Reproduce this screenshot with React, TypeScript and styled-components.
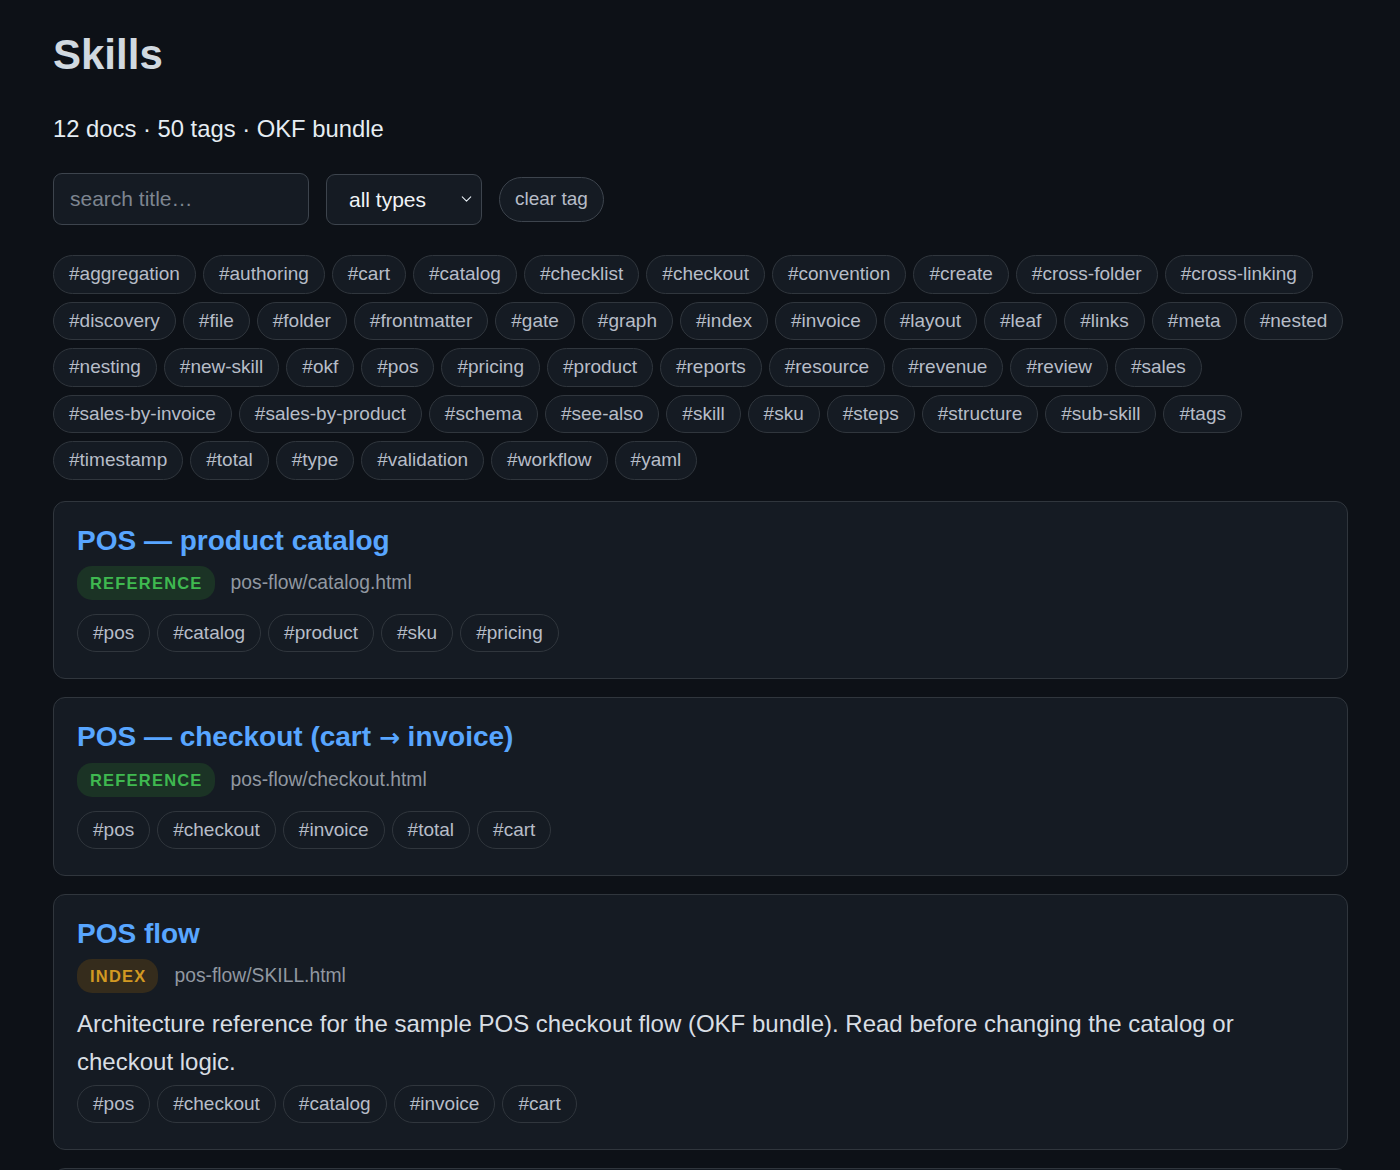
import styled, { createGlobalStyle } from "styled-components";
import { ChevronDown } from "lucide-react";

const GlobalStyle = createGlobalStyle`
  * { box-sizing: border-box; }
  html, body {
    margin: 0;
    background: #0d1117;
    color: #d8dee4;
    font-family: "Liberation Sans", Helvetica, Arial, sans-serif;
  }
`;

type DocType = "reference" | "index" | "skill";

interface Doc {
  title: string;
  type: DocType;
  path: string;
  desc?: string;
  tags: string[];
}

const allTags = [
  "aggregation", "authoring", "cart", "catalog", "checklist", "checkout", "convention", "create",
  "cross-folder", "cross-linking", "discovery", "file", "folder", "frontmatter", "gate", "graph",
  "index", "invoice", "layout", "leaf", "links", "meta", "nested", "nesting", "new-skill", "okf",
  "pos", "pricing", "product", "reports", "resource", "revenue", "review", "sales",
  "sales-by-invoice", "sales-by-product", "schema", "see-also", "skill", "sku", "steps",
  "structure", "sub-skill", "tags", "timestamp", "total", "type", "validation", "workflow", "yaml",
];

const docs: Doc[] = [
  {
    title: "POS — product catalog",
    type: "reference",
    path: "pos-flow/catalog.html",
    tags: ["pos", "catalog", "product", "sku", "pricing"],
  },
  {
    title: "POS — checkout (cart → invoice)",
    type: "reference",
    path: "pos-flow/checkout.html",
    tags: ["pos", "checkout", "invoice", "total", "cart"],
  },
  {
    title: "POS flow",
    type: "index",
    path: "pos-flow/SKILL.html",
    desc: "Architecture reference for the sample POS checkout flow (OKF bundle). Read before changing the catalog or checkout logic.",
    tags: ["pos", "checkout", "catalog", "invoice", "cart"],
  },
  {
    title: "Reports — sales by invoice",
    type: "reference",
    path: "reports/sales-by-invoice.html",
    tags: ["reports", "sales", "sales-by-invoice", "aggregation"],
  },
  {
    title: "Reports — sales by product",
    type: "reference",
    path: "reports/sales-by-product.html",
    tags: ["reports", "sales", "sales-by-product", "revenue"],
  },
];

const Page = styled.main`
  padding: 30px 52px 40px 53px;
`;

const Title = styled.h1`
  margin: 0;
  font-size: 42px;
  line-height: 50px;
  font-weight: 700;
  color: #d1d9e0;
`;

const Summary = styled.p`
  margin: 31px 0 0;
  font-size: 23.8px;
  line-height: 36px;
  color: #e6edf3;
`;

const Controls = styled.div`
  display: flex;
  align-items: center;
  gap: 17px;
  height: 52px;
  margin-top: 26px;
`;

const SearchInput = styled.input`
  width: 256px;
  height: 52px;
  padding: 0 16px;
  background: #151b23;
  border: 1px solid #3d444d;
  border-radius: 9px;
  color: #e6edf3;
  font: 21px "Liberation Sans", Helvetica, Arial, sans-serif;
  outline: none;

  &::placeholder {
    color: #7d8590;
  }
`;

const SelectWrap = styled.div`
  position: relative;
  width: 156px;
  height: 51px;
`;

const TypeSelect = styled.select`
  appearance: none;
  width: 100%;
  height: 100%;
  padding: 0 34px 0 22px;
  background: #151b23;
  border: 1px solid #3d444d;
  border-radius: 9px;
  color: #f0f3f6;
  font: 21px "Liberation Sans", Helvetica, Arial, sans-serif;
  outline: none;
`;

const Chevron = styled(ChevronDown)`
  position: absolute;
  right: 7px;
  top: 50%;
  transform: translateY(-50%);
  color: #e6edf3;
  pointer-events: none;
`;

const ClearButton = styled.button`
  height: 45px;
  padding: 0 15px;
  background: #151b23;
  border: 1px solid #3d444d;
  border-radius: 999px;
  color: #b7bdc8;
  font: 19px "Liberation Sans", Helvetica, Arial, sans-serif;
  cursor: pointer;
`;

const TagList = styled.div<{ $top?: number }>`
  display: flex;
  flex-wrap: wrap;
  column-gap: 7px;
  row-gap: 8px;
  margin-top: ${(p) => p.$top ?? 0}px;
`;

const Chip = styled.span`
  display: inline-block;
  height: 38.5px;
  padding: 0 15px;
  line-height: 36.5px;
  font-size: 19px;
  color: #b7bdc8;
  background: #151b23;
  border: 1px solid #30363d;
  border-radius: 999px;
  white-space: nowrap;
`;

const DocList = styled.div`
  display: flex;
  flex-direction: column;
  gap: 18px;
  margin-top: 21px;
`;

const Card = styled.article`
  padding: 22px 23px 25.5px;
  background: #151b23;
  border: 1px solid #30363d;
  border-radius: 12px;
`;

const DocTitle = styled.a`
  display: block;
  font-size: 28px;
  line-height: 34px;
  font-weight: 700;
  color: #58a6ff;
  text-decoration: none;
`;

const Arrow = styled.span`
  font-family: "DejaVu Sans", sans-serif;
  font-size: 25px;
`;

const Meta = styled.div`
  display: flex;
  align-items: center;
  gap: 16px;
  margin-top: 8px;
`;

const badgeColors: Record<DocType, { bg: string; fg: string }> = {
  reference: { bg: "#1b3325", fg: "#3fb950" },
  index: { bg: "#352c1c", fg: "#d29922" },
  skill: { bg: "#1a2c45", fg: "#58a6ff" },
};

const Badge = styled.span<{ $type: DocType }>`
  height: 34px;
  padding: 0 12px 0 13px;
  line-height: 34px;
  border-radius: 15px;
  font-size: 16.5px;
  font-weight: 700;
  letter-spacing: 1.2px;
  text-transform: uppercase;
  background: ${(p) => badgeColors[p.$type].bg};
  color: ${(p) => badgeColors[p.$type].fg};
`;

const Path = styled.span`
  font-size: 19.3px;
  color: #9198a1;
`;

const Desc = styled.p`
  margin: 12px 0 0;
  font-size: 24px;
  line-height: 38px;
  color: #d8dee4;
`;

function renderTitle(title: string) {
  const parts = title.split("→");
  return parts.map((part, i) => (
    <span key={i}>
      {i > 0 && <Arrow>→</Arrow>}
      {part}
    </span>
  ));
}

function DocCard({ doc }: { doc: Doc }) {
  return (
    <Card>
      <DocTitle href="#">{renderTitle(doc.title)}</DocTitle>
      <Meta>
        <Badge $type={doc.type}>{doc.type}</Badge>
        <Path>{doc.path}</Path>
      </Meta>
      {doc.desc && <Desc>{doc.desc}</Desc>}
      <TagList $top={doc.desc ? 4 : 14}>
        {doc.tags.map((t) => (
          <Chip key={t}>#{t}</Chip>
        ))}
      </TagList>
    </Card>
  );
}

export default function App() {
  return (
    <>
      <GlobalStyle />
      <Page>
        <Title>Skills</Title>
        <Summary>12 docs · 50 tags · OKF bundle</Summary>
        <Controls>
          <SearchInput placeholder="search title…" />
          <SelectWrap>
            <TypeSelect defaultValue="all">
              <option value="all">all types</option>
              <option value="index">index</option>
              <option value="reference">reference</option>
            </TypeSelect>
            <Chevron size={17} strokeWidth={1.5} />
          </SelectWrap>
          <ClearButton>clear tag</ClearButton>
        </Controls>
        <TagList $top={30}>
          {allTags.map((t) => (
            <Chip key={t}>#{t}</Chip>
          ))}
        </TagList>
        <DocList>
          {docs.map((d) => (
            <DocCard key={d.path} doc={d} />
          ))}
        </DocList>
      </Page>
    </>
  );
}
